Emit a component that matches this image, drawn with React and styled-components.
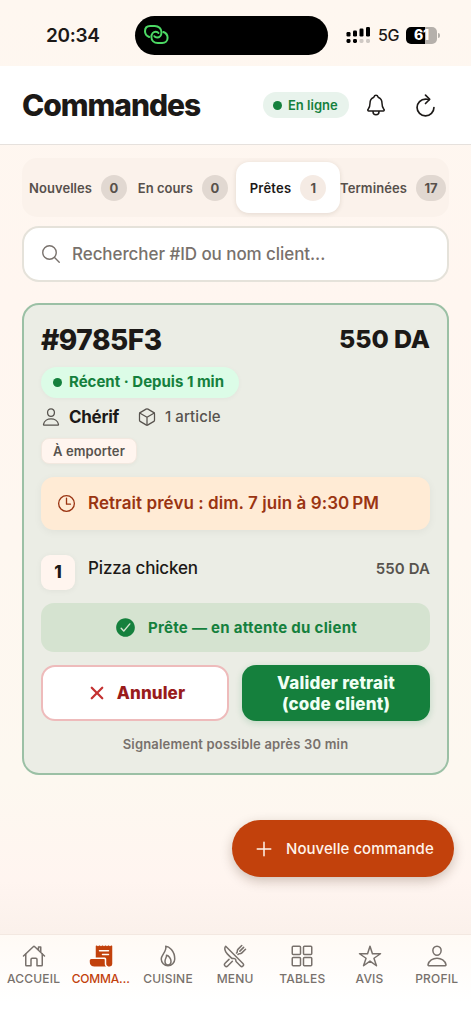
import React from 'react'
import styled, { createGlobalStyle } from 'styled-components'
import {
  IoAdd,
  IoCheckmarkCircle,
  IoClose,
  IoCubeOutline,
  IoFlameOutline,
  IoGridOutline,
  IoHomeOutline,
  IoNotificationsOutline,
  IoPersonOutline,
  IoReceipt,
  IoRefreshOutline,
  IoRestaurantOutline,
  IoSearchOutline,
  IoStarOutline,
  IoTimeOutline,
} from 'react-icons/io5'

const GlobalStyle = createGlobalStyle`
  * {
    box-sizing: border-box;
  }

  body {
    margin: 0;
    background: #fff7f0;
    font-family: Inter, "Liberation Sans", sans-serif;
    font-optical-sizing: none;
    color: #1c1917;
  }

  svg {
    display: block;
    flex-shrink: 0;
  }
`

const Text = styled.span`
  padding-top: ${p => p.$drop || 0}px;
  font-size: ${p => p.$size}px;
  font-weight: ${p => p.$weight || 600};
  letter-spacing: ${p => p.$spacing || 0}px;
  line-height: ${p => p.$line || 1.25};
  color: ${p => p.$color || 'inherit'};
  white-space: nowrap;
`

const Screen = styled.div`
  display: flex;
  flex-direction: column;
  width: 471px;
  height: 1024px;
  overflow: hidden;
  background: linear-gradient(#fef7f0 0%, #fff6f0 30%, #fdf8f0 76%, #fff5f0 86%, #faf0ea 92%);
`

const StatusBar = styled.div`
  display: flex;
  align-items: center;
  height: 66px;
  padding: 4px 31px 0 46px;
  flex-shrink: 0;
`

const Clock = styled(Text)`
  width: 89px;
`

const Island = styled.div`
  display: flex;
  align-items: center;
  width: 193px;
  height: 39px;
  padding-left: 8px;
  border-radius: 20px;
  background: #000;
  flex-shrink: 0;
`

const StatusIcons = styled.div`
  display: flex;
  align-items: center;
  flex: 1;
  padding-left: 18px;
`

const Network = styled(Text)`
  margin: 0 7px 0 7px;
`

const Battery = styled.div`
  display: flex;
  align-items: center;
  justify-content: center;
  width: 31px;
  height: 17px;
  border-radius: 5px;
  background: linear-gradient(90deg, #000 61%, #b5b0ab 61%);
  color: #fff;
  flex-shrink: 0;
`

const BatteryTip = styled.div`
  width: 2px;
  height: 5px;
  margin-left: 1px;
  border-radius: 0 2px 2px 0;
  background: #b5b0ab;
`

const Header = styled.header`
  display: flex;
  align-items: center;
  height: 79px;
  padding: 0 32px 0 22px;
  border-bottom: 1px solid #e6e1dd;
  background: #fff;
  flex-shrink: 0;
`

const Title = styled(Text).attrs({ as: 'h1' })`
  flex: 1;
  margin: 0;
`

const Online = styled.div`
  display: flex;
  align-items: center;
  gap: 6px;
  height: 26px;
  width: 86px;
  padding-left: 10px;
  margin-right: 15px;
  border-radius: 13px;
  background: #e8f3ec;
`

const Dot = styled.div`
  width: 9px;
  height: 9px;
  border-radius: 50%;
  background: #15803d;
  flex-shrink: 0;
`

const Refresh = styled.div`
  margin-left: 24px;
`

const Main = styled.main`
  flex: 1;
  display: flex;
  flex-direction: column;
  padding: 13px 22px 0;
`

const Tabs = styled.div`
  display: grid;
  grid-template-columns: 110px 100px 104px 109px;
  height: 59px;
  padding: 4px;
  margin-bottom: 9px;
  border-radius: 15px;
  background: #fbf2eb;
`

const Tab = styled.div`
  display: flex;
  align-items: center;
  justify-content: ${p => (p.$end ? 'flex-end' : 'center')};
  gap: 9px;
  padding-right: ${p => p.$pad || 0}px;
  border-radius: 13px;
  background: ${p => (p.$active ? '#fff' : 'transparent')};
  box-shadow: ${p => (p.$active ? '0 1px 5px rgba(60, 40, 20, 0.12)' : 'none')};
  color: ${p => (p.$active ? '#1c1917' : '#57504b')};
`

const Count = styled.div`
  display: flex;
  align-items: center;
  justify-content: center;
  width: ${p => (p.$wide ? 30 : 26)}px;
  height: 26px;
  border-radius: 13px;
  background: ${p => (p.$active ? '#f5ebe4' : '#e1d8d1')};
  color: #57504b;
`

const Search = styled.div`
  display: flex;
  align-items: center;
  gap: 10px;
  height: 56px;
  padding-left: 16px;
  margin-bottom: 21px;
  border: 2px solid #e5e2da;
  border-radius: 17px;
  background: #fff;
  color: #78716c;
`

const Card = styled.section`
  display: flex;
  flex-direction: column;
  height: 472px;
  padding: 18px 17px 0;
  border: 2px solid #9bc0a5;
  border-radius: 17px;
  background: #ebede5;
`

const CardTop = styled.div`
  display: flex;
  align-items: center;
  justify-content: space-between;
  height: 33px;
`

const Recent = styled.div`
  display: flex;
  align-items: center;
  gap: 7px;
  width: 198px;
  height: 31px;
  margin-top: 11px;
  padding-left: 12px;
  border-radius: 16px;
  background: #dcfce7;
  box-shadow: 0 1px 5px rgba(0, 0, 0, 0.04);
`

const Customer = styled.div`
  display: flex;
  align-items: center;
  height: 24px;
  margin-top: 7px;
  color: #57534e;

  svg + span {
    margin-left: 8px;
  }

  span + svg {
    margin-left: 18px;
  }
`

const Takeaway = styled.div`
  display: flex;
  align-items: center;
  justify-content: center;
  width: 96px;
  height: 26px;
  margin-top: 9px;
  border: 1px solid #f2e8df;
  border-radius: 8px;
  background: #fff5ef;
  box-shadow: 0 1px 4px rgba(0, 0, 0, 0.04);
`

const Pickup = styled.div`
  display: flex;
  align-items: center;
  gap: 11px;
  height: 53px;
  margin-top: 13px;
  padding-left: 15px;
  border-radius: 13px;
  background: #ffebd5;
  box-shadow: 0 2px 8px rgba(0, 0, 0, 0.05);
  color: #9a3412;
`

const Item = styled.div`
  display: flex;
  height: 35px;
  margin-top: 25px;
`

const Quantity = styled.div`
  display: flex;
  align-items: center;
  justify-content: center;
  width: 34px;
  height: 35px;
  border-radius: 9px;
  background: #fff5ef;
  box-shadow: 0 1px 6px rgba(0, 0, 0, 0.05);
`

const ItemName = styled(Text)`
  flex: 1;
  margin: 3px 0 0 13px;
`

const ItemPrice = styled(Text)`
  margin-top: 4px;
`

const Ready = styled.div`
  display: flex;
  align-items: center;
  justify-content: center;
  gap: 11px;
  height: 49px;
  margin-top: 13px;
  border-radius: 13px;
  background: #d5e3d0;
  color: #15803d;
`

const Actions = styled.div`
  display: grid;
  grid-template-columns: 1fr 1fr;
  gap: 13px;
  height: 56px;
  margin-top: 13px;
`

const Action = styled.button`
  display: flex;
  align-items: center;
  justify-content: center;
  gap: 8px;
  padding: 0;
  border: ${p => (p.$primary ? 'none' : '2px solid #eebbbb')};
  border-radius: 14px;
  background: ${p => (p.$primary ? '#15803d' : '#fff')};
  box-shadow: ${p => (p.$primary ? '0 2px 7px rgba(21, 128, 61, 0.2)' : 'none')};
  color: ${p => (p.$primary ? '#f0fff4' : '#991b1b')};
  font-family: inherit;
`

const Note = styled(Text)`
  margin-top: 15px;
  text-align: center;
`

const NewOrder = styled.button`
  display: flex;
  align-items: center;
  align-self: flex-end;
  gap: 10px;
  width: 222px;
  height: 57px;
  margin: 45px -5px 0 0;
  padding: 0 0 0 20px;
  border: none;
  border-radius: 29px;
  background: #c2410c;
  box-shadow: 0 4px 12px rgba(60, 30, 10, 0.25);
  color: #fff3ea;
  font-family: inherit;
`

const BottomNav = styled.nav`
  display: grid;
  grid-template-columns: repeat(7, 67.2px);
  height: 90px;
  padding-top: 9px;
  border-top: 1px solid #f3e8e1;
  background: linear-gradient(#fffaf5, #fff 75%);
  flex-shrink: 0;
`

const NavItem = styled.div`
  display: flex;
  flex-direction: column;
  align-items: center;
  gap: 3px;
  color: ${p => (p.$active ? '#c2410c' : '#78716c')};
`

const tabs = [
  { label: 'Nouvelles', count: 0, spacing: 0.05, end: true, pad: 9 },
  { label: 'En cours', count: 0, spacing: 0.05, end: true, pad: 8 },
  { label: 'Prêtes', count: 1, spacing: 0.25, active: true },
  { label: 'Terminées', count: 17, spacing: 0.1, end: true, pad: 3 },
]

const navItems = [
  { label: 'ACCUEIL', icon: IoHomeOutline },
  { label: 'COMMA…', icon: IoReceipt, active: true, spacing: -0.2 },
  { label: 'CUISINE', icon: IoFlameOutline },
  { label: 'MENU', icon: IoRestaurantOutline },
  { label: 'TABLES', icon: IoGridOutline },
  { label: 'AVIS', icon: IoStarOutline },
  { label: 'PROFIL', icon: IoPersonOutline },
]

// two interlocking loops
const LinkIcon = () => (
  <svg width="26" height="22" viewBox="0 0 26 22" fill="none" stroke="#4cd964" strokeWidth="2" strokeLinecap="round">
    <path d="M6.2 13C3.6 12 2 10.2 2 7.3 2 4.2 4 2 7.2 2h4.6c3.8 0 6.7 2.7 6.7 6.2 0 3.1-2 5.3-4.4 5.3-1.3 0-2.2-.5-2.7-1.3" />
    <path d="M20.4 8c2.6 1 4.2 2.9 4.2 5.7 0 3.1-2.2 5.3-5.4 5.3h-4.4c-3.8 0-6.4-2.6-6.4-6 0-3.1 2-5.3 4.4-5.3 1.3 0 2.2.5 2.7 1.3" />
  </svg>
)

const SignalIcon = () => (
  <svg width="25" height="17" viewBox="0 0 25 17">
    <g fill="#000">
      <rect x="0.5" y="5" width="4" height="4.5" rx="1.2" />
      <rect x="7" y="3.5" width="4" height="6" rx="1.2" />
      <rect x="13.5" y="1.5" width="4" height="8" rx="1.2" />
      <rect x="20" y="0" width="4" height="9.5" rx="1.2" />
      <rect x="0.5" y="12" width="4" height="4" rx="1.4" />
      <rect x="7" y="12" width="4" height="4" rx="1.4" />
    </g>
    <g fill="#cfc9c4">
      <rect x="13.5" y="12" width="4" height="4" rx="1.4" />
      <rect x="20" y="12" width="4" height="4" rx="1.4" />
    </g>
  </svg>
)

const OrderCard = () => (
  <Card>
    <CardTop>
      <Text $size={28} $weight={800} $spacing={-0.5} $drop={1}>#9785F3</Text>
      <Text $size={25} $weight={800} $spacing={-0.1}>550 DA</Text>
    </CardTop>
    <Recent>
      <Dot />
      <Text $size={15} $weight={700} $color="#15803d">Récent · Depuis 1 min</Text>
    </Recent>
    <Customer>
      <IoPersonOutline size={20} />
      <Text $size={17} $weight={700} $color="#1c1917" $spacing={-0.3} $drop={1}>Chérif</Text>
      <IoCubeOutline size={20} />
      <Text $size={15} $weight={500} $spacing={0.1}>1 article</Text>
    </Customer>
    <Takeaway>
      <Text $size={13} $color="#57534e" $spacing={0.1}>À emporter</Text>
    </Takeaway>
    <Pickup>
      <IoTimeOutline size={21} />
      <Text $size={17} $spacing={0.06}>Retrait prévu : dim. 7 juin à 9:30&#8239;PM</Text>
    </Pickup>
    <Item>
      <Quantity>
        <Text $size={17} $weight={800} $drop={1}>1</Text>
      </Quantity>
      <ItemName $size={17} $weight={500} $spacing={-0.15}>Pizza chicken</ItemName>
      <ItemPrice $size={15} $color="#57534e" $spacing={0.1} $drop={1}>550 DA</ItemPrice>
    </Item>
    <Ready>
      <IoCheckmarkCircle size={23} />
      <Text $size={15} $weight={700} $spacing={0.3} $drop={1}>Prête — en attente du client</Text>
    </Ready>
    <Actions>
      <Action>
        <IoClose size={24} color="#c43131" />
        <Text $size={17} $weight={800} $spacing={0.1} $drop={1}>Annuler</Text>
      </Action>
      <Action $primary>
        <Text $size={17} $weight={800} $line={1.2} $spacing={0.2} $drop={1}>Valider retrait<br />(code client)</Text>
      </Action>
    </Actions>
    <Note $size={13} $color="#78716c" $spacing={0.18}>Signalement possible après 30 min</Note>
  </Card>
)

const App = () => (
  <Screen>
    <GlobalStyle />
    <StatusBar>
      <Clock $size={19} $weight={600} $spacing={-0.3} $drop={1}>20:34</Clock>
      <Island>
        <LinkIcon />
      </Island>
      <StatusIcons>
        <SignalIcon />
        <Network $size={16} $weight={500} $spacing={-0.4}>5G</Network>
        <Battery>
          <Text $size={14} $weight={800} $spacing={-0.3}>61</Text>
        </Battery>
        <BatteryTip />
      </StatusIcons>
    </StatusBar>
    <Header>
      <Title $size={30} $weight={800} $spacing={-1.05} $drop={1}>Commandes</Title>
      <Online>
        <Dot />
        <Text $size={13} $color="#15803d">En ligne</Text>
      </Online>
      <IoNotificationsOutline size={24} />
      <Refresh>
        <IoRefreshOutline size={27} />
      </Refresh>
    </Header>
    <Main>
      <Tabs>
        {tabs.map(tab => (
          <Tab key={tab.label} $active={tab.active} $end={tab.end} $pad={tab.pad}>
            <Text $size={13} $spacing={tab.spacing} $drop={1}>{tab.label}</Text>
            <Count $active={tab.active} $wide={tab.count > 9}>
              <Text $size={13} $weight={700} $drop={1}>{tab.count}</Text>
            </Count>
          </Tab>
        ))}
      </Tabs>
      <Search>
        <IoSearchOutline size={22} />
        <Text $size={17} $weight={500} $spacing={-0.07} $drop={1}>Rechercher #ID ou nom client...</Text>
      </Search>
      <OrderCard />
      <NewOrder>
        <IoAdd size={24} />
        <Text $size={15} $weight={500} $spacing={0.05} $drop={1}>Nouvelle commande</Text>
      </NewOrder>
    </Main>
    <BottomNav>
      {navItems.map(({ label, icon: Icon, active, spacing = 0.2 }) => (
        <NavItem key={label} $active={active}>
          <Icon size={24} />
          <Text $size={12} $weight={450} $spacing={spacing}>{label}</Text>
        </NavItem>
      ))}
    </BottomNav>
  </Screen>
)

export default App
